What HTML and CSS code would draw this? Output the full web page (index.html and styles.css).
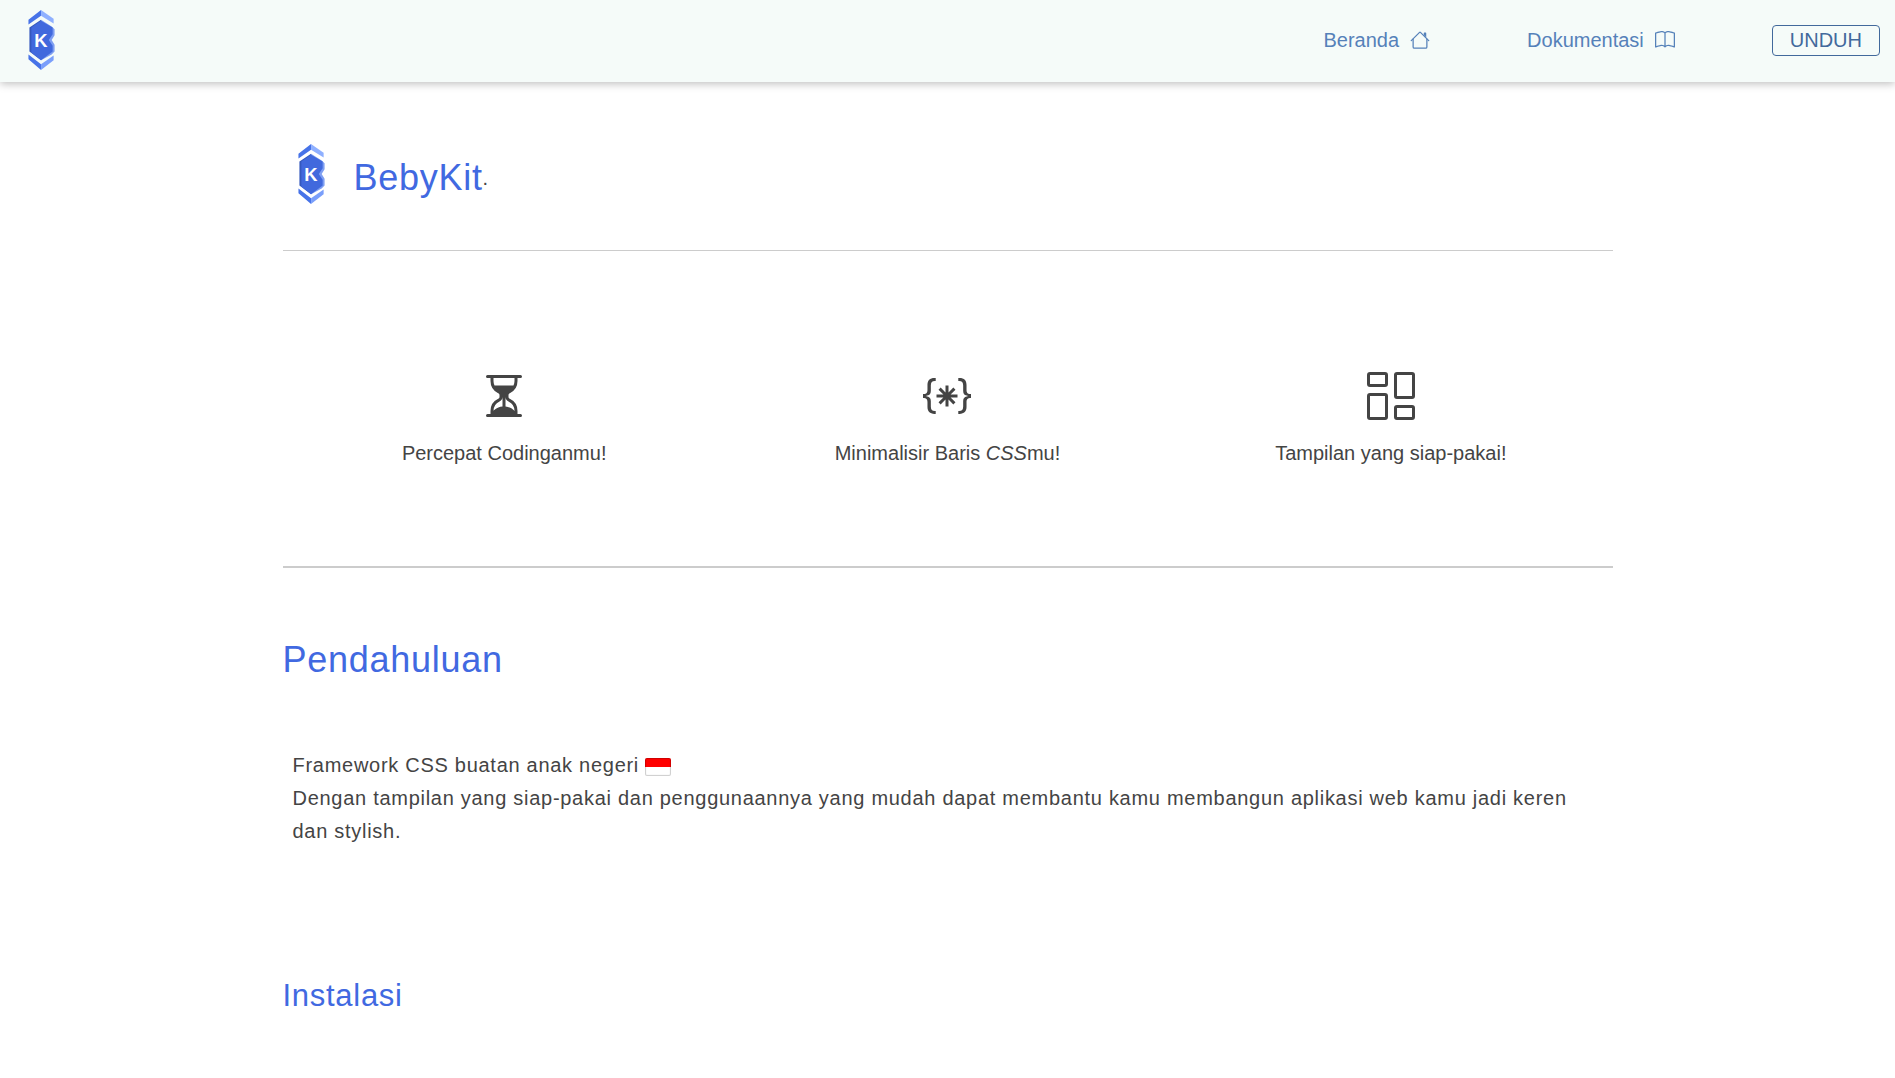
FILE: index.html
```html
<!DOCTYPE html>
<html lang="id">
<head>
  <meta charset="utf-8">
  <meta name="viewport" content="width=device-width, initial-scale=1">
  <title>BebyKit</title>
  <link rel="stylesheet" href="styles.css">
</head>
<body>
  <svg class="defs" aria-hidden="true">
    <symbol id="logo" viewBox="0 0 28 62">
      <path fill="#4773e8" d="M0 10 13 0v6L0 15zM0 46l13 10v6L0 51z"/>
      <path fill="#8fb0ff" d="M13 0l13 9v5L13 6z"/>
      <path fill="#7a9ffb" d="M13 56l13-9v5L13 62z"/>
      <path fill="#7f9ff2" d="M13 10l11 7 3 3v6l-3 5 3 5v7l-3 3-11 6z"/>
      <path fill="#3558bd" d="M13 10v42L1 43V18z"/>
      <path fill="#4169dd" d="M13 11l12 7v7l-4 6 4 6v6l-12 9-10-8V18z"/>
      <text x="6" y="38" fill="#fff" font-size="19" font-weight="700">K</text>
    </symbol>
  </svg>

  <header class="navbar">
    <a class="brand" href="#" aria-label="BebyKit"><svg class="logo"><use href="#logo"/></svg></a>
    <nav class="menu">
      <a class="menu-link" href="#">Beranda
        <svg class="icon" viewBox="0 0 16 16" aria-hidden="true"><path d="M2 13.5V7h1v6.5a.5.5 0 0 0 .5.5h9a.5.5 0 0 0 .5-.5V7h1v6.5a1.5 1.5 0 0 1-1.5 1.5h-9A1.5 1.5 0 0 1 2 13.5zm11-11V6l-2-2V2.5a.5.5 0 0 1 .5-.5h1a.5.5 0 0 1 .5.5z"/><path d="M7.293 1.5a1 1 0 0 1 1.414 0l6.647 6.646a.5.5 0 0 1-.708.708L8 2.207 1.354 8.854a.5.5 0 1 1-.708-.708L7.293 1.5z"/></svg>
      </a>
      <a class="menu-link" href="#">Dokumentasi
        <svg class="icon" viewBox="0 0 16 16" aria-hidden="true"><path d="M1 2.828c.885-.37 2.154-.769 3.388-.893 1.33-.134 2.458.063 3.112.752v9.746c-.935-.53-2.12-.603-3.213-.493-1.18.12-2.37.461-3.287.811V2.828zm7.5-.141c.654-.689 1.782-.886 3.112-.752 1.234.124 2.503.523 3.388.893v9.923c-.918-.35-2.107-.692-3.287-.81-1.094-.111-2.278-.039-3.213.492V2.687zM8 1.783C7.015.936 5.587.81 4.287.94c-1.514.153-3.042.672-3.994 1.105A.5.5 0 0 0 0 2.5v11a.5.5 0 0 0 .707.455c.882-.4 2.303-.881 3.68-1.02 1.409-.142 2.59.087 3.223.877a.5.5 0 0 0 .78 0c.633-.79 1.814-1.019 3.222-.877 1.378.139 2.8.62 3.681 1.02A.5.5 0 0 0 16 13.5v-11a.5.5 0 0 0-.293-.455c-.952-.433-2.48-.952-3.994-1.105C10.413.809 8.985.936 8 1.783z"/></svg>
      </a>
      <button class="download" type="button">UNDUH</button>
    </nav>
  </header>

  <main class="container">
    <div class="hero">
      <svg class="logo" aria-hidden="true"><use href="#logo"/></svg>
      <h1 class="title">BebyKit</h1><span class="dot">.</span>
    </div>

    <section class="features">
      <div class="feature">
        <svg class="feature-icon" viewBox="0 0 16 16" aria-hidden="true"><path d="M2.5 15a.5.5 0 1 1 0-1h1v-1a4.5 4.5 0 0 1 2.557-4.06c.29-.139.443-.377.443-.59v-.7c0-.213-.154-.451-.443-.59A4.5 4.5 0 0 1 3.5 3V2h-1a.5.5 0 0 1 0-1h11a.5.5 0 0 1 0 1h-1v1a4.5 4.5 0 0 1-2.557 4.06c-.29.139-.443.377-.443.59v.7c0 .213.154.451.443.59A4.5 4.5 0 0 1 12.5 13v1h1a.5.5 0 0 1 0 1h-11zm2-13v1c0 .537.12 1.045.337 1.5h6.326c.216-.455.337-.963.337-1.5V2h-7zm3 6.35c0 .701-.478 1.236-1.011 1.492A3.5 3.5 0 0 0 4.5 13s.866-1.299 3-1.48V8.35zm1 0v3.17c2.134.181 3 1.48 3 1.48a3.5 3.5 0 0 0-1.989-3.158C8.978 9.586 8.5 9.052 8.5 8.351z"/></svg>
        <p class="feature-text">Percepat Codinganmu!</p>
      </div>
      <div class="feature">
        <svg class="feature-icon" viewBox="0 0 16 16" aria-hidden="true"><path d="M1.114 8.063V7.9c1.005-.102 1.497-.615 1.497-1.6V4.503c0-1.094.39-1.538 1.354-1.538h.273V2h-.376C2.25 2 1.49 2.759 1.49 4.352v1.524c0 1.094-.376 1.456-1.49 1.456v1.299c1.114 0 1.49.362 1.49 1.456v1.524c0 1.593.759 2.352 2.372 2.352h.376v-.964h-.273c-.964 0-1.354-.444-1.354-1.538V9.663c0-.984-.492-1.497-1.497-1.6M14.886 7.9v.164c-1.005.103-1.497.616-1.497 1.6v1.798c0 1.094-.39 1.538-1.354 1.538h-.273v.964h.376c1.613 0 2.372-.759 2.372-2.352v-1.524c0-1.094.376-1.456 1.49-1.456v-1.3c-1.114 0-1.49-.362-1.49-1.456V4.352C14.51 2.759 13.75 2 12.138 2h-.376v.964h.273c.964 0 1.354.444 1.354 1.538V6.3c0 .984.492 1.497 1.497 1.6M7.5 11.5V9.207l-1.621 1.621-.707-.707L6.792 8.5H4.5v-1h2.293L5.172 5.879l.707-.707L7.5 6.792V4.5h1v2.293l1.621-1.621.707.707L9.208 7.5H11.5v1H9.207l1.621 1.621-.707.707L8.5 9.208V11.5z"/></svg>
        <p class="feature-text">Minimalisir Baris <em>CSS</em>mu!</p>
      </div>
      <div class="feature">
        <svg class="feature-icon" viewBox="0 0 16 16" aria-hidden="true"><path d="M6 1v3H1V1h5zM1 0a1 1 0 0 0-1 1v3a1 1 0 0 0 1 1h5a1 1 0 0 0 1-1V1a1 1 0 0 0-1-1H1zm14 12v3h-5v-3h5zm-5-1a1 1 0 0 0-1 1v3a1 1 0 0 0 1 1h5a1 1 0 0 0 1-1v-3a1 1 0 0 0-1-1h-5zM6 8v7H1V8h5zM1 7a1 1 0 0 0-1 1v7a1 1 0 0 0 1 1h5a1 1 0 0 0 1-1V8a1 1 0 0 0-1-1H1zm14-6v7h-5V1h5zm-5-1a1 1 0 0 0-1 1v7a1 1 0 0 0 1 1h5a1 1 0 0 0 1-1V1a1 1 0 0 0-1-1h-5z"/></svg>
        <p class="feature-text">Tampilan yang siap-pakai!</p>
      </div>
    </section>

    <section class="section">
      <h2 class="title">Pendahuluan</h2>
      <p class="lead">Framework CSS buatan anak negeri <span class="flag" role="img" aria-label="Indonesia"></span><br>Dengan tampilan yang siap-pakai dan penggunaannya yang mudah dapat membantu kamu membangun aplikasi web kamu jadi keren dan stylish.</p>
      <h3 class="subtitle">Instalasi</h3>
    </section>
  </main>
</body>
</html>
```
FILE: styles.css
```css
* {
  box-sizing: border-box;
}

:root {
  --tracking: 0.045rem;
}

body {
  margin: 0;
  background: #fff;
  color: #444;
  font-family: "Liberation Sans", Arial, sans-serif;
  font-size: 20px;
  line-height: 24px;
}

h1, h2, h3, p {
  margin: 0;
  font-weight: 400;
}

.defs {
  display: none;
}

.logo {
  display: block;
  width: 28px;
  height: 60px;
}

/* Navigation */
.navbar {
  display: flex;
  align-items: center;
  justify-content: space-between;
  height: 82px;
  padding: 0 15px 2px 28px;
  background: #f5fbf9;
  box-shadow: 0 2px 8px rgba(0, 0, 0, 0.25);
}

.menu {
  display: flex;
  align-items: center;
  gap: 97px;
}

.menu-link {
  display: flex;
  align-items: center;
  gap: 11px;
  color: #5581b9;
  text-decoration: none;
}

.icon {
  width: 20px;
  height: 20px;
  fill: currentColor;
}

.download {
  height: 31px;
  padding: 0 17px;
  border: 1px solid #42699c;
  border-radius: 4px;
  background: transparent;
  color: #42699c;
  font: inherit;
}

/* Content */
.container {
  width: 90%;
  max-width: 1330px;
  margin: 0 auto;
}

.hero {
  display: flex;
  align-items: center;
  padding: 62px 15px 46px;
  border-bottom: 1px solid #ccc;
}

.hero .title {
  margin-left: 28px;
  padding-top: 8px;
}

.title {
  color: #4169e1;
  font-size: 36px;
  line-height: 44px;
  letter-spacing: var(--tracking);
}

.dot {
  padding-top: 8px;
  font-size: 20px;
}

.features {
  display: grid;
  grid-template-columns: repeat(3, 1fr);
  padding: 121px 0 101px;
  border-bottom: 2px solid #ccc;
}

.feature {
  display: flex;
  flex-direction: column;
  align-items: center;
  gap: 21px;
}

.feature-icon {
  width: 48px;
  height: 48px;
  fill: currentColor;
}

.section {
  padding: 70px 0;
}

.lead {
  padding: 67px 10px 130px;
  line-height: 33px;
  letter-spacing: var(--tracking);
}

.flag {
  display: inline-block;
  width: 26px;
  height: 18px;
  border-radius: 2px;
  background: linear-gradient(#f00 50%, #fff 50%);
  box-shadow: inset 0 0 1px 1px rgba(0, 0, 0, 0.2);
  vertical-align: -4px;
}

.subtitle {
  color: #4169e1;
  font-size: 31px;
  line-height: 36px;
  letter-spacing: var(--tracking);
}
```
